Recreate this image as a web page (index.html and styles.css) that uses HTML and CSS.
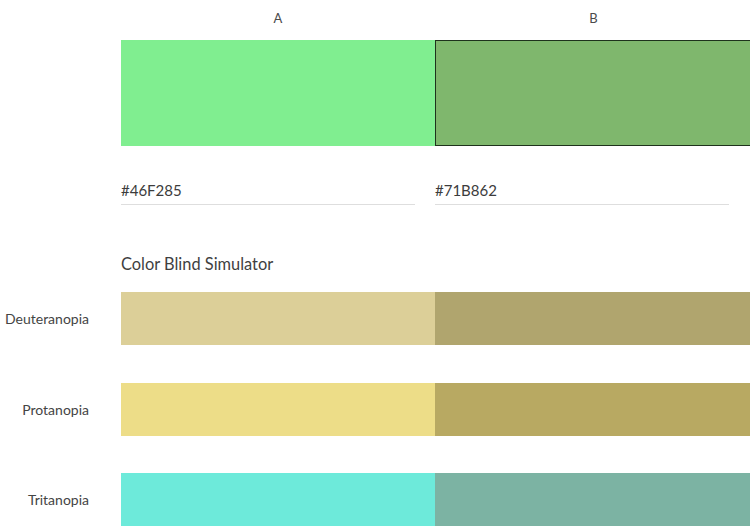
FILE: index.html
```html
<!DOCTYPE html>
<html>
<head>
<meta charset="utf-8">
<link rel="stylesheet" href="styles.css">
</head>
<body>
<div class="page">
  <div class="grid">
    <div></div>
    <div class="col-head">A</div>
    <div class="col-head">B</div>

    <div></div>
    <div class="swatch swatch-a"></div>
    <div class="swatch swatch-b"></div>

    <div></div>
    <div class="hex-cell"><div class="hex">#46F285</div></div>
    <div class="hex-cell"><div class="hex">#71B862</div></div>

    <div></div>
    <div class="section-title">Color Blind Simulator</div>
  </div>
  <div class="sim">
    <div class="sim-label">Deuteranopia</div>
    <div class="bar" style="background:#dccf98"></div>
    <div class="bar" style="background:#b0a56e"></div>

    <div class="sim-label">Protanopia</div>
    <div class="bar" style="background:#eddd88"></div>
    <div class="bar" style="background:#b8a962"></div>

    <div class="sim-label">Tritanopia</div>
    <div class="bar" style="background:#6deada"></div>
    <div class="bar" style="background:#7cb3a3"></div>
  </div>
</div>
</body>
</html>
```

FILE: styles.css
```css
html, body {
  margin: 0;
  padding: 0;
  background: #ffffff;
  overflow: hidden;
}
body {
  width: 750px;
  height: 529px;
  font-family: Lato, "Open Sans", sans-serif;
  color: #4b4b4b;
}
.page {
  width: 752px;
}
.grid,
.sim {
  display: grid;
  grid-template-columns: 121px 314px 317px;
}
.sim {
  row-gap: 37.5px;
  margin-top: 18px;
}
.col-head {
  height: 40px;
  display: flex;
  align-items: center;
  justify-content: center;
  font-size: 13px;
  padding-bottom: 4px;
  box-sizing: border-box;
}
.swatch {
  height: 106px;
  box-sizing: border-box;
}
.swatch-a {
  background: #80ee90;
}
.swatch-b {
  background: #7fb76d;
  border: 1px solid #1e321c;
}
.hex-cell {
  padding-top: 29px;
}
.hex {
  width: 294px;
  height: 30px;
  box-sizing: border-box;
  border-bottom: 1px solid #dedede;
  display: flex;
  align-items: center;
  font-size: 15px;
  color: #3c3c3c;
}
.section-title {
  grid-column: 2 / 4;
  padding-top: 49px;
  height: 20px;
  line-height: 20px;
  font-size: 16.4px;
  color: #3f3f3f;
}
.sim-label {
  height: 53px;
  display: flex;
  align-items: center;
  justify-content: flex-end;
  padding-right: 32px;
  font-size: 14px;
  color: #444444;
}
.bar {
  height: 53px;
}
```
